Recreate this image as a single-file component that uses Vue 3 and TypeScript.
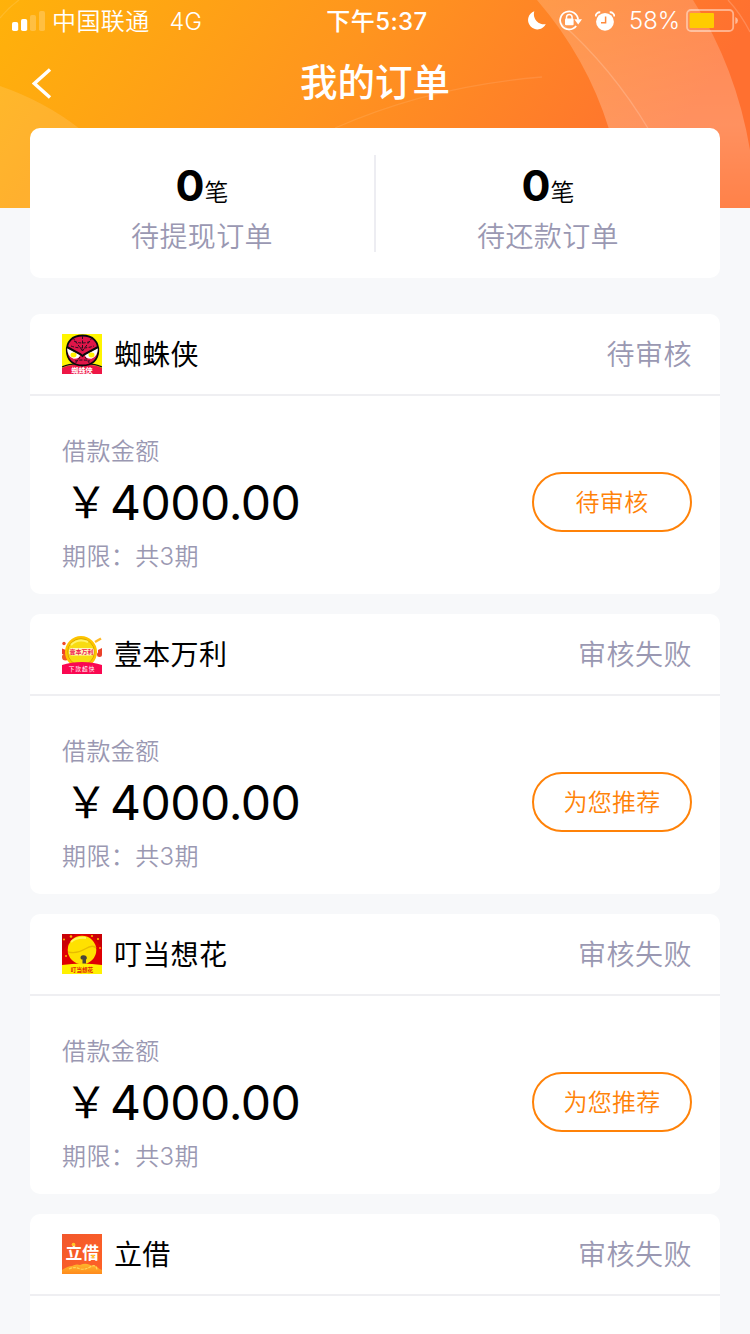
<script setup lang="ts">
interface Order {
  icon: 'spider' | 'coin' | 'bell' | 'loan'
  name: string
  status: string
  action?: string
}

interface Summary {
  count: number
  label: string
}

const summaries: Summary[] = [
  { count: 0, label: '待提现订单' },
  { count: 0, label: '待还款订单' },
]

const orders: Order[] = [
  { icon: 'spider', name: '蜘蛛侠', status: '待审核', action: '待审核' },
  { icon: 'coin', name: '壹本万利', status: '审核失败', action: '为您推荐' },
  { icon: 'bell', name: '叮当想花', status: '审核失败', action: '为您推荐' },
  { icon: 'loan', name: '立借', status: '审核失败' },
]
</script>

<template>
  <div class="page">
    <header class="hero">
      <svg class="hero-bg" width="750" height="208" viewBox="0 0 750 208" aria-hidden="true">
        <defs>
          <linearGradient id="sky" gradientUnits="userSpaceOnUse" x1="60" y1="-90" x2="580" y2="270">
            <stop offset="0" stop-color="#ffb20a" />
            <stop offset="0.5" stop-color="#ff951e" />
            <stop offset="1" stop-color="#ff7030" />
          </linearGradient>
          <linearGradient id="band" x1="0" y1="0" x2="0" y2="1">
            <stop offset="0" stop-color="#fff" stop-opacity="0.17" />
            <stop offset="0.6" stop-color="#fff" stop-opacity="0.23" />
            <stop offset="1" stop-color="#fff" stop-opacity="0.12" />
          </linearGradient>
        </defs>
        <rect width="750" height="208" fill="url(#sky)" />
        <path d="M0 86Q44 101 80 129Q140 165 160 208H0Z" fill="#fff" fill-opacity="0.12" />
        <path d="M537 0Q587 58 609 129L620 208H750V150Q736 67 693 0Z" fill="url(#band)" />
        <g fill="none" stroke="#fff" stroke-width="1.3">
          <path d="M0 18Q8 8 19 0" stroke-opacity="0.12" />
          <path d="M335 128Q430 86 542 77" stroke-opacity="0.1" />
          <path d="M560 22Q612 68 649 130" stroke-opacity="0.18" />
          <path d="M728 0Q741 14 750 32" stroke-opacity="0.18" />
        </g>
      </svg>

      <div class="statusbar">
        <div class="carrier">
          <svg width="34" height="20" viewBox="0 0 34 20" fill="#fff">
            <rect x="0" y="11" width="6.2" height="9" rx="1.8" />
            <rect x="9" y="8" width="6.2" height="12" rx="1.8" />
            <rect x="18" y="4" width="6" height="16" rx="1.8" opacity="0.22" />
            <rect x="27" y="0" width="6" height="20" rx="1.8" opacity="0.22" />
          </svg>
          <span class="carrier-name">中国联通</span>
          <span class="network">4G</span>
        </div>
        <div class="clock">下午5:37</div>
        <div class="indicators">
          <svg class="moon" width="18" height="19" viewBox="0 0 18 19">
            <path d="M6.3.3A10 10 0 0 0 17.8 13A9.3 9.3 0 1 1 6.3.3Z" fill="#fff" />
          </svg>
          <svg class="lock" width="23" height="21" viewBox="0 0 23 21">
            <path d="M17.2 16A9 9 0 1 1 19.1 9.5" fill="none" stroke="#fff" stroke-width="1.8" />
            <path d="M15.3 9.2H23L19.2 14.4Z" fill="#fff" />
            <path d="M7.5 9V7.3a2.8 2.8 0 0 1 5.6 0V9" fill="none" stroke="#fff" stroke-width="1.5" />
            <rect x="6" y="8.5" width="8.6" height="6.7" rx="1" fill="#fff" />
          </svg>
          <svg class="alarm" width="20" height="20" viewBox="0 0 20 20">
            <circle cx="10" cy="10.8" r="8.9" fill="#fff" />
            <path d="M.7 5.5A4 4 0 0 1 5.3 1.3M14.7 1.3A4 4 0 0 1 19.3 5.5" fill="none" stroke="#fff" stroke-width="1.8" />
            <path d="M10.6 5.5V11.7H6" fill="none" stroke="#ff8a3c" stroke-width="1.5" />
          </svg>
          <span class="percent">58%</span>
          <svg class="battery" width="53" height="23" viewBox="0 0 53 23">
            <rect x="1" y="1" width="46.2" height="21" rx="4" fill="none" stroke="#fff" stroke-opacity="0.45" stroke-width="1.8" />
            <rect x="3.6" y="4" width="24.4" height="15" rx="1" fill="#ffcc00" />
            <path d="M49.3 8Q52 9 52 11.5T49.3 15Z" fill="#fff" fill-opacity="0.5" />
          </svg>
        </div>
      </div>

      <nav class="navbar">
        <svg class="back" width="20" height="31" viewBox="0 0 20 31">
          <path d="M18 1.5L2.4 15.5L18 29.5" fill="none" stroke="#fff" stroke-width="3.4" />
        </svg>
        <h1>我的订单</h1>
      </nav>
    </header>

    <section class="summary">
      <div v-for="item in summaries" :key="item.label" class="summary-item">
        <div class="count"><b>{{ item.count }}</b><span>笔</span></div>
        <div class="summary-label">{{ item.label }}</div>
      </div>
    </section>

    <main class="orders">
      <article v-for="order in orders" :key="order.name" class="order">
        <div class="order-head">
          <svg v-if="order.icon === 'spider'" class="logo" viewBox="0 0 40 40">
            <rect width="40" height="40" fill="#fff500" />
            <path d="M0 40V34Q8 30 20 31Q32 30 40 34V40Z" fill="#ee1646" />
            <path d="M0 33Q8 29 20 30Q32 29 40 33" fill="none" stroke="#111" stroke-width="1.2" />
            <path d="M20.5 1.5C10 1.500 4.5 8 4.8 17C5 26 11 31.5 20.5 31.5S36 26 36.3 17C36.6 8 31 1.500 20.5 1.500Z" fill="#df1548" stroke="#08080c" stroke-width="1.8" />
            <path d="M20.500 2V17M20.500 17L11 4M20.500 17L30 4M18 23L13 30M23 23L28 30M12 7Q20 11 29 7M9 12Q20 16 32 12M13 27Q20 25 28 27" fill="none" stroke="#24101f" stroke-width="1" stroke-dasharray="3 1.500" />
            <path d="M5 14L18 20.500Q18 25 11.500 24.800Q5.500 23 5 14ZM36 14L23 20.500Q23 25 29.500 24.800Q35.500 23 36 14Z" fill="#fff" />
            <path d="M5 13L18.500 20.300L20.500 22L22.500 20.300L36 13" fill="none" stroke="#0a090b" stroke-width="2" />
            <ellipse cx="11.500" cy="21" rx="3" ry="2.400" fill="#fff200" />
            <ellipse cx="29.500" cy="21" rx="3" ry="2.400" fill="#fff200" />
            <text x="20" y="38.500" class="logo-text" font-size="7.200" fill="#fff">蜘蛛侠</text>
          </svg>

          <svg v-else-if="order.icon === 'coin'" class="logo" viewBox="0 0 40 40">
            <path d="M33 8L39 4.5" stroke="#ffba28" stroke-width="2.4" />
            <circle cx="2" cy="9.5" r="1.7" fill="#f04a28" />
            <path d="M0 14.5L4 16L5 21L0 20ZM36 16L40 14V20L36 22Z" fill="#ed4328" />
            <circle cx="3.5" cy="23" r="3.5" fill="#f15a24" />
            <circle cx="37.5" cy="20.5" r="2.5" fill="#e9402c" />
            <circle cx="19" cy="18" r="16" fill="#ffc400" />
            <circle cx="19" cy="18" r="13.4" fill="#f8dc12" stroke="#dca900" stroke-width="1" />
            <path d="M9 11Q16 4 26 8" fill="none" stroke="#fff36a" stroke-width="2" />
            <rect x="7" y="14" width="25" height="7.5" rx="3" fill="#fff5bd" />
            <text x="19.5" y="20" class="logo-text" font-size="6" fill="#f1204e">壹本万利</text>
            <path d="M0 40V31Q9 28 20 28T40 31V40Z" fill="#fa0751" />
            <text x="20" y="37" class="logo-text thin" font-size="5.7" letter-spacing="1" fill="#fff">下款超快</text>
          </svg>

          <svg v-else-if="order.icon === 'bell'" class="logo" viewBox="0 0 40 40">
            <rect width="40" height="40" fill="#df0003" />
            <path d="M0 0H13L0 18ZM29 0H40V14Z" fill="#c90006" />
            <g fill="#ffb400">
              <circle cx="9" cy="2.5" r="1.3" /><circle cx="2" cy="5.5" r="1" />
              <circle cx="30" cy="2" r="1.1" /><circle cx="36" cy="5" r="1.1" />
              <circle cx="38" cy="14" r=".9" /><circle cx="4" cy="22" r="1" />
            </g>
            <path d="M0 40V31Q20 28 40 31V40Z" fill="#fff100" />
            <circle cx="20" cy="16" r="14.3" fill="#ffe100" />
            <path d="M6 18Q15 20 23 15T34 14" fill="none" stroke="#e8bc00" stroke-width="1.3" />
            <path d="M9 8Q14 3 24 4" fill="none" stroke="#fff55d" stroke-width="2" />
            <path d="M18.5 24Q18.5 21 21.5 21.3Q25.3 21.5 24.8 24.5Q24.5 25.5 24 25.5V29.5H20.5V25.5Q18.5 25.5 18.5 24Z" fill="#4b4538" />
            <text x="20" y="38" class="logo-text" font-size="5.6" fill="#df1d08">叮当想花</text>
          </svg>

          <svg v-else class="logo" viewBox="0 0 40 40">
            <defs>
              <linearGradient id="loan-bg" x1="0" y1="0" x2="1" y2="1">
                <stop offset="0" stop-color="#f2572c" /><stop offset="1" stop-color="#ff6226" />
              </linearGradient>
              <linearGradient id="gold" x1="0" y1="0" x2="0" y2="1">
                <stop offset="0" stop-color="#ffb62c" /><stop offset="1" stop-color="#ff8a1c" />
              </linearGradient>
            </defs>
            <rect width="40" height="40" fill="url(#loan-bg)" />
            <text x="20.2" y="25.3" class="logo-text" font-size="16.8" fill="#fff">立借</text>
            <circle cx="11.5" cy="10.5" r="1.8" fill="#ffc526" />
            <path d="M29 21h4l-2 4z" fill="#ffc526" />
            <path d="M0 40V36Q6 32 10 32Q14 29.500 18 31Q23 29 27 30.500Q30 32 34 32Q37 35 40 36V40Z" fill="url(#gold)" />
            <path d="M7 35Q12 32.500 17 34.500T28 33T35 35.500" fill="none" stroke="#ffd659" stroke-width="1.2" stroke-dasharray="3 1" />
          </svg>

          <h2>{{ order.name }}</h2>
          <span class="status">{{ order.status }}</span>
        </div>
        <div v-if="order.action" class="order-body">
          <div class="loan">
            <div class="caption">借款金额</div>
            <div class="amount"><span class="yen">￥</span><span>4000.00</span></div>
            <div class="caption">期限：共3期</div>
          </div>
          <button type="button">{{ order.action }}</button>
        </div>
      </article>
    </main>
  </div>
</template>

<style>
html,
body {
  background: #f7f8fa;
  overflow: hidden;
}
</style>

<style scoped>
.page {
  width: 750px;
  height: 1334px;
  overflow: hidden;
  background: #f7f8fa;
  color: #000;
  font-family: Inter, 'Noto Sans CJK SC', sans-serif;
}

.hero {
  position: relative;
  height: 208px;
  color: #fff;
}

.hero-bg {
  position: absolute;
  inset: 0;
}

.statusbar {
  position: relative;
  display: grid;
  grid-template-columns: 1fr auto 1fr;
  align-items: center;
  height: 40px;
  padding: 0 11px 0 12px;
  font-size: 24px;
  line-height: 40px;
}

.carrier,
.indicators {
  display: flex;
  align-items: center;
}

.carrier-name {
  margin-left: 6px;
  padding-top: 2px;
  font-weight: 350;
  letter-spacing: 0.4px;
}

.network {
  margin-left: 20px;
  padding-top: 2px;
  font-size: 23.5px;
  font-weight: 350;
}

.clock {
  padding: 1px 0 0 3px;
  font-weight: 500;
  letter-spacing: 0.4px;
}

.indicators {
  justify-content: flex-end;
  padding-bottom: 1px;
}

.lock {
  margin-left: 13px;
}

.alarm {
  margin-left: 13px;
}

.percent {
  margin-left: 14px;
  padding-top: 1px;
  font-weight: 300;
  font-size: 23.8px;
}

.battery {
  margin-left: 6px;
}

.navbar {
  position: relative;
  display: grid;
  grid-template-columns: 100px 1fr 100px;
  align-items: center;
  height: 86px;
}

.back {
  margin-left: 32px;
}

h1 {
  margin: 0;
  text-align: center;
  font-size: 37.5px;
  line-height: 86px;
  font-weight: 500;
}

.summary {
  position: relative;
  display: grid;
  grid-template-columns: 346px 344px;
  align-items: center;
  width: 690px;
  height: 150px;
  margin: -80px auto 36px;
  border-radius: 10px;
  background: #fff;
}

.summary-item {
  box-sizing: border-box;
  height: 97px;
  text-align: center;
}

.summary-item:first-child {
  border-right: 2px solid #ededf2;
}

.count {
  height: 62px;
  line-height: 61px;
}

.count b {
  font-size: 43px;
  font-weight: 700;
}

.count span {
  font-size: 24px;
  font-weight: 350;
}

.summary-label {
  height: 40px;
  line-height: 40px;
  color: #9a98b2;
  font-size: 28px;
  font-weight: 350;
  letter-spacing: 0.4px;
}

.orders {
  display: grid;
  gap: 20px;
  width: 690px;
  margin: 0 auto;
}

.order {
  height: 280px;
  border-radius: 10px;
  background: #fff;
}

.order-head {
  box-sizing: border-box;
  display: flex;
  align-items: center;
  height: 82px;
  padding: 0 28px 0 32px;
  border-bottom: 2px solid #efeff2;
}

.logo {
  width: 40px;
  height: 40px;
}

.logo-text {
  font-family: 'Noto Sans CJK SC', sans-serif;
  font-weight: 700;
  text-anchor: middle;
}

.thin {
  font-weight: 400;
}

h2 {
  flex: 1;
  margin: 0 0 0 12px;
  padding-top: 2px;
  font-size: 28px;
  line-height: 40px;
  font-weight: 400;
  letter-spacing: 0.3px;
}

.status {
  padding-top: 2px;
  color: #9a98b2;
  font-size: 28px;
  line-height: 40px;
  font-weight: 350;
  letter-spacing: 0.5px;
}

.order-body {
  display: flex;
  align-items: center;
  justify-content: space-between;
  height: 198px;
  padding: 0 28px 0 32px;
}

.loan {
  padding-top: 18px;
}

.caption {
  height: 36px;
  color: #9a98b2;
  font-size: 24px;
  line-height: 36px;
  font-weight: 350;
  letter-spacing: 0.4px;
}

.amount {
  display: flex;
  height: 69px;
  font-size: 48px;
  line-height: 66px;
  letter-spacing: -0.5px;
  white-space: nowrap;
}

.yen {
  width: 48px;
  text-align: center;
  font-size: 43px;
  line-height: 65px;
}

button {
  box-sizing: border-box;
  width: 160px;
  height: 60px;
  margin: 14px 0 0;
  padding: 2px 0 0;
  border: 2px solid #ff8208;
  border-radius: 30px;
  background: #fff;
  color: #ff8208;
  font: 350 24px/54px Inter, 'Noto Sans CJK SC', sans-serif;
  letter-spacing: 0.3px;
}
</style>
